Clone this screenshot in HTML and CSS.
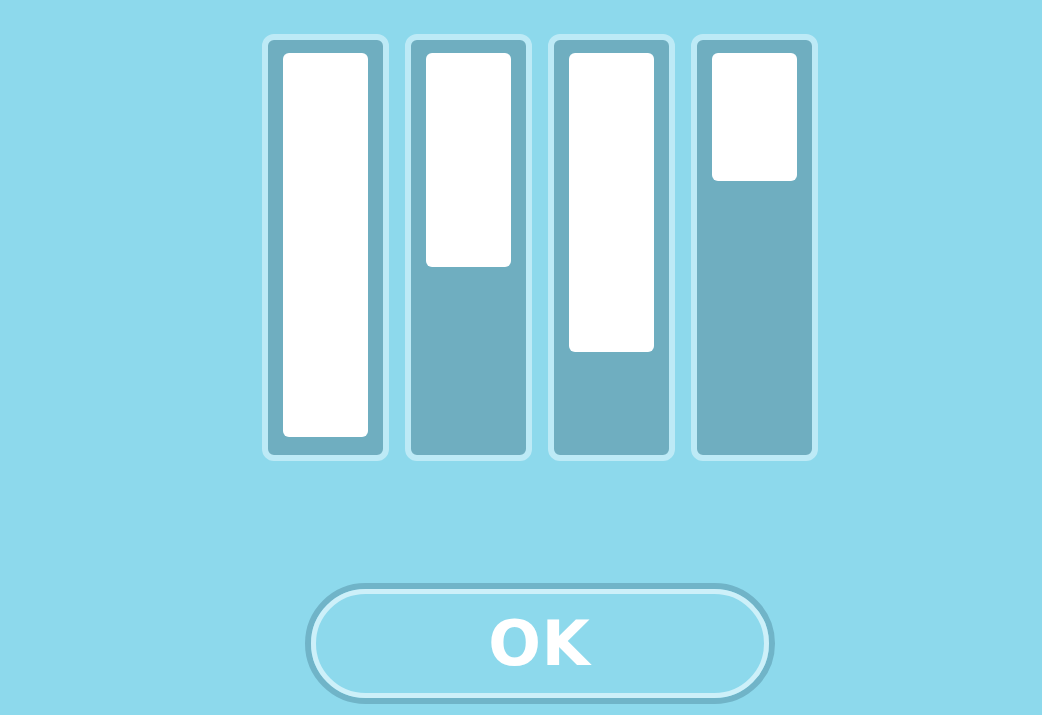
FILE: index.html
```html
<!DOCTYPE html>
<html>
<head>
<meta charset="utf-8">
<link rel="stylesheet" href="styles.css">
</head>
<body>
<main class="screen">
  <div class="bars">
    <div class="bar"><div class="fill" style="height:384px"></div></div>
    <div class="bar"><div class="fill" style="height:214px"></div></div>
    <div class="bar"><div class="fill" style="height:299px"></div></div>
    <div class="bar"><div class="fill" style="height:128px"></div></div>
  </div>
  <button class="ok"><span class="ok-inner">OK</span></button>
</main>
</body>
</html>
```
FILE: styles.css
```css
html, body {
  margin: 0;
  height: 100%;
  background: #8dd9ec;
}
.screen {
  display: flex;
  flex-direction: column;
  align-items: center;
  padding: 34px 0 0 37px;
  box-sizing: border-box;
  height: 715px;
  overflow: hidden;
}
.bars {
  display: flex;
  gap: 16px;
}
.bar {
  width: 127px;
  height: 427px;
  box-sizing: border-box;
  border: 6px solid #bdeaf6;
  border-radius: 12px;
  background: #6faec0;
  padding: 13px 15px 17px;
}
.fill {
  background: #ffffff;
  border-radius: 6px;
}
.ok {
  margin-top: 122px;
  width: 470px;
  height: 121px;
  box-sizing: border-box;
  border: 6px solid #70b4c8;
  border-radius: 61px;
  background: #8dd9ec;
  padding: 0;
  display: flex;
}
.ok-inner {
  flex: 1;
  border: 5px solid #cdf0f9;
  border-radius: 56px;
  display: flex;
  align-items: center;
  justify-content: center;
  color: #ffffff;
  font-family: "DejaVu Sans", sans-serif;
  font-weight: bold;
  font-size: 62px;
  letter-spacing: 1px;
}
```
